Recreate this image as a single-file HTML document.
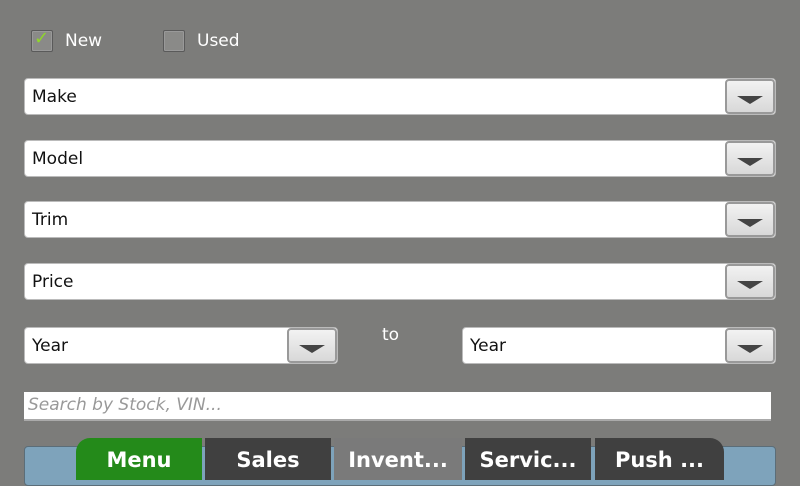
<!DOCTYPE html><html><head><style>
body{margin:0;width:800px;height:480px;background:#7c7c7a;font-family:"DejaVu Sans","Liberation Sans",sans-serif;position:relative;overflow:hidden}
.a{position:absolute}
.cb{width:20px;height:20px;border:1px solid #5a5a5a;background:#8a8a88;border-radius:2px;box-shadow:inset 0 0 0 1px #999}
.lbl{color:#fff;font-size:17px}
.dd{position:absolute;height:37px;background:#fff;border:1px solid #bbb;border-radius:4px;box-sizing:border-box}
.dd span{position:absolute;left:7px;top:8px;font-size:17px;color:#111}
.btn{position:absolute;right:0;top:0;width:50px;height:35px;background:linear-gradient(#f2f2f2,#d8d8d8);border:2px solid #999;border-radius:4px;box-sizing:border-box}
.btn:after{content:"";position:absolute;left:10px;top:15px;border-left:13px solid transparent;border-right:13px solid transparent;border-top:8px solid #444}
.tab{position:absolute;top:438px;height:42px;color:#fff;font-weight:bold;font-size:21px;text-align:center;line-height:44px}
</style></head><body>
<div class="a cb" style="left:31px;top:30px"></div>
<div class="a" style="left:34px;top:28px;color:#8fd62a;font-size:18px;font-weight:bold">✓</div>
<div class="a lbl" style="left:65px;top:31px">New</div>
<div class="a cb" style="left:163px;top:30px"></div>
<div class="a lbl" style="left:197px;top:31px">Used</div>
<div class="dd" style="left:24px;top:78px;width:752px"><span>Make</span><div class="btn"></div></div>
<div class="dd" style="left:24px;top:140px;width:752px"><span>Model</span><div class="btn"></div></div>
<div class="dd" style="left:24px;top:201px;width:752px"><span>Trim</span><div class="btn"></div></div>
<div class="dd" style="left:24px;top:263px;width:752px"><span>Price</span><div class="btn"></div></div>
<div class="dd" style="left:24px;top:327px;width:314px"><span>Year</span><div class="btn"></div></div>
<div class="a lbl" style="left:382px;top:325px">to</div>
<div class="dd" style="left:462px;top:327px;width:314px"><span>Year</span><div class="btn"></div></div>
<div class="a" style="left:24px;top:392px;width:747px;height:27px;background:#fff;border-bottom:2px solid #aaa"><span style="position:absolute;left:4px;top:3px;font-size:17px;font-style:italic;color:#999">Search by Stock, VIN...</span></div>
<div class="a" style="left:24px;top:446px;width:752px;height:40px;background:#7ea3bb;border:1px solid #5b6d78;border-radius:4px;box-sizing:border-box"></div>
<div class="tab" style="left:76px;width:126px;background:#248a1a;border-top-left-radius:14px">Menu</div>
<div class="tab" style="left:205px;width:126px;background:#404040">Sales</div>
<div class="tab" style="left:334px;width:128px;background:#7a7a7a">Invent...</div>
<div class="tab" style="left:465px;width:126px;background:#404040">Servic...</div>
<div class="tab" style="left:595px;width:129px;background:#404040;border-top-right-radius:14px">Push ...</div>
</body></html>
